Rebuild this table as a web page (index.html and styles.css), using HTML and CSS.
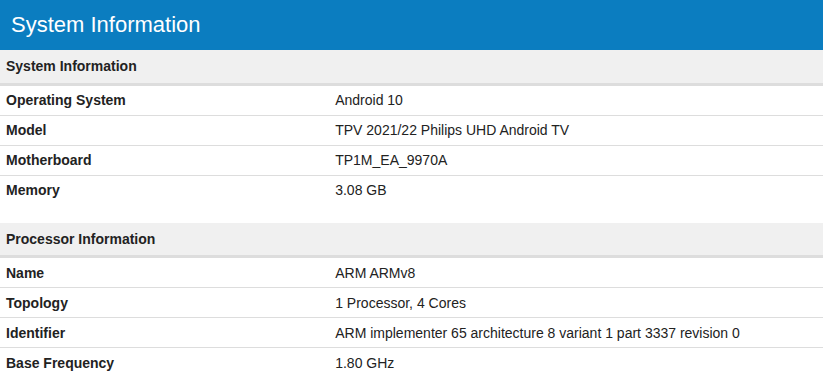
FILE: index.html
```html
<!DOCTYPE html>
<html>
<head>
<meta charset="utf-8">
<link rel="stylesheet" href="styles.css">
</head>
<body>
<div class="title-bar">System Information</div>
<table class="info">
  <thead><tr><th colspan="2">System Information</th></tr></thead>
  <tbody>
    <tr><td class="name">Operating System</td><td class="value">Android 10</td></tr>
    <tr><td class="name">Model</td><td class="value">TPV 2021/22 Philips UHD Android TV</td></tr>
    <tr><td class="name">Motherboard</td><td class="value">TP1M_EA_9970A</td></tr>
    <tr><td class="name">Memory</td><td class="value">3.08 GB</td></tr>
  </tbody>
</table>
<table class="info">
  <thead><tr><th colspan="2">Processor Information</th></tr></thead>
  <tbody>
    <tr><td class="name">Name</td><td class="value">ARM ARMv8</td></tr>
    <tr><td class="name">Topology</td><td class="value">1 Processor, 4 Cores</td></tr>
    <tr><td class="name">Identifier</td><td class="value">ARM implementer 65 architecture 8 variant 1 part 3337 revision 0</td></tr>
    <tr><td class="name">Base Frequency</td><td class="value">1.80 GHz</td></tr>
  </tbody>
</table>
</body>
</html>
```
FILE: styles.css
```css
html, body {
  margin: 0;
  padding: 0;
  background: #fff;
  font-family: "Liberation Sans", Arial, sans-serif;
  color: #222;
}
.title-bar {
  height: 50px;
  line-height: 49px;
  background: #0b7dc0;
  color: #fff;
  font-size: 22px;
  padding-left: 11px;
  box-sizing: border-box;
}
.info {
  width: 100%;
  border-collapse: collapse;
  margin-bottom: 18px;
  font-size: 14px;
}
.info th {
  background: #f0f0f0;
  text-align: left;
  font-weight: bold;
  height: 34px;
  padding: 0 6px;
  border-bottom: 3px solid #dddddd;
  box-sizing: border-box;
  color: #222;
}
.info td {
  height: 29px;
  padding: 0 6px;
  border-bottom: 1px solid #dddddd;
  vertical-align: middle;
}
.info tr:last-child td {
  border-bottom: none;
}
.info td.name {
  width: 40%;
  font-weight: bold;
}
.info td.value {
  color: #222;
}
```
